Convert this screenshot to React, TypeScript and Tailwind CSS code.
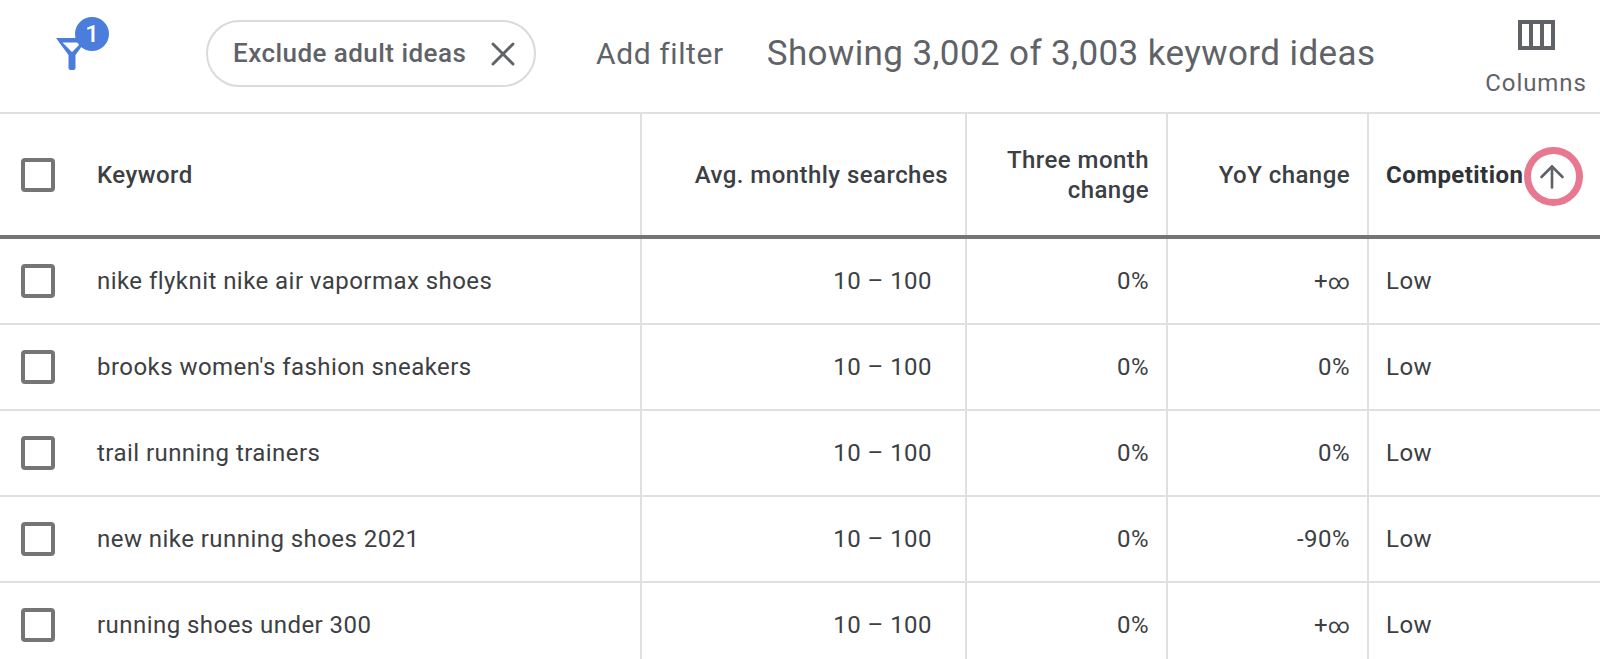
import { ArrowUp, X } from "lucide-react";

const rows = [
  { keyword: "nike flyknit nike air vapormax shoes", yoy: "+∞" },
  { keyword: "brooks women's fashion sneakers", yoy: "0%" },
  { keyword: "trail running trainers", yoy: "0%" },
  { keyword: "new nike running shoes 2021", yoy: "-90%" },
  { keyword: "running shoes under 300", yoy: "+∞" },
];

const Checkbox = () => (
  <div className="ml-[21px] mr-[42px] w-[34px] h-[34px] shrink-0 rounded-[4px] border-[4px] border-[#757575]" />
);

const App = () => {
  return (
    <div className="w-[1600px] h-[659px] overflow-hidden bg-white font-['Roboto',sans-serif] text-[#3c4043] tracking-[0.45px]">
      {/* Top bar */}
      <div className="h-[114px] flex items-start border-b-2 border-[#e0e0e0]">
        <div className="relative ml-[55px] mt-[37px] w-[34px] h-[34px] shrink-0">
          <svg width="34" height="34" viewBox="0 0 34 34">
            <path
              d="M1 1 H33 L20.500 18 V31 Q20.500 33 18.500 33 H15.500 Q13.500 33 13.500 31 V18 Z M7.500 5.500 L17 15 L26.500 5.500 Z"
              fill="#4a7ddc"
              fillRule="evenodd"
            />
          </svg>
          <div className="absolute left-[20px] top-[-20px] w-[34px] h-[34px] rounded-full bg-[#4a7ddc] flex items-center justify-center text-white text-[24px] font-medium leading-none tracking-normal">
            1
          </div>
        </div>
        <div className="ml-[117px] mt-[20px] w-[330px] h-[67px] shrink-0 rounded-full border-2 border-[#dadada] flex items-center pl-[25px] text-[26px] font-medium text-[#5f6368] whitespace-nowrap">
          Exclude adult ideas
          <X className="ml-[17px] w-[40px] h-[40px] shrink-0 text-[#5f6368]" strokeWidth={1.75} />
        </div>
        <span className="ml-[60px] mt-[36px] text-[30px] leading-[36px] tracking-[0.6px] text-[#5f6368] whitespace-nowrap">Add filter</span>
        <span className="ml-[43px] mt-[34px] text-[35px] leading-[40px] tracking-[0.4px] text-[#5f6368] whitespace-nowrap">Showing 3,002 of 3,003 keyword ideas</span>
        <div className="ml-auto mr-[12px] mt-[20px] flex flex-col items-center w-[104px]">
          <svg width="37" height="30" viewBox="0 0 37 30">
            <path d="M0 0 H37 V30 H0 Z M4 4 V26 H11 V4 Z M15 4 V26 H22 V4 Z M26 4 V26 H33 V4 Z" fill="#5f6368" fillRule="evenodd" />
          </svg>
          <span className="mt-[18px] text-[24px] leading-[30px] tracking-[0.9px] text-[#5f6368]">Columns</span>
        </div>
      </div>

      {/* Header row */}
      <div className="h-[125px] grid grid-cols-[642px_325px_201px_201px_1fr] border-b-[4px] border-[#757575]">
        <div className="flex items-center border-r-2 border-[#e0e0e0]">
          <Checkbox />
          <span className="text-[24px] font-medium">Keyword</span>
        </div>
        <div className="flex items-center justify-end pr-[17px] border-r-2 border-[#e0e0e0] text-[24px] font-medium">Avg. monthly searches</div>
        <div className="flex items-center justify-end text-right pr-[17px] border-r-2 border-[#e0e0e0] text-[24px] leading-[30px] font-medium">
          Three month
          <br />
          change
        </div>
        <div className="flex items-center justify-end pr-[17px] border-r-2 border-[#e0e0e0] text-[24px] font-medium">YoY change</div>
        <div className="flex items-center pl-[17px] text-[24px] font-bold text-[#303336]">
          Competition
          <div className="relative z-10 ml-[1px] mt-[4px] w-[59px] h-[59px] shrink-0 rounded-full border-[7px] border-[#e8788f] flex items-center justify-center">
            <ArrowUp className="w-[36px] h-[36px] shrink-0 text-[#5f6368] -translate-x-[2px]" strokeWidth={1.75} />
          </div>
        </div>
      </div>

      {/* Rows */}
      {rows.map((row) => (
        <div key={row.keyword} className="h-[86px] grid grid-cols-[642px_325px_201px_201px_1fr] border-b-2 border-[#e0e0e0] text-[24px]">
          <div className="flex items-center border-r-2 border-[#e0e0e0]">
            <Checkbox />
            <span>{row.keyword}</span>
          </div>
          <div className="flex items-center justify-end pr-[33px] border-r-2 border-[#e0e0e0]">10 – 100</div>
          <div className="flex items-center justify-end pr-[17px] border-r-2 border-[#e0e0e0]">0%</div>
          <div className="flex items-center justify-end pr-[17px] border-r-2 border-[#e0e0e0]">
            {row.yoy === "+∞" ? (
              <span>
                +<span className="text-[21px]">∞</span>
              </span>
            ) : (
              row.yoy
            )}
          </div>
          <div className="flex items-center pl-[17px]">Low</div>
        </div>
      ))}
    </div>
  );
};

export default App;
